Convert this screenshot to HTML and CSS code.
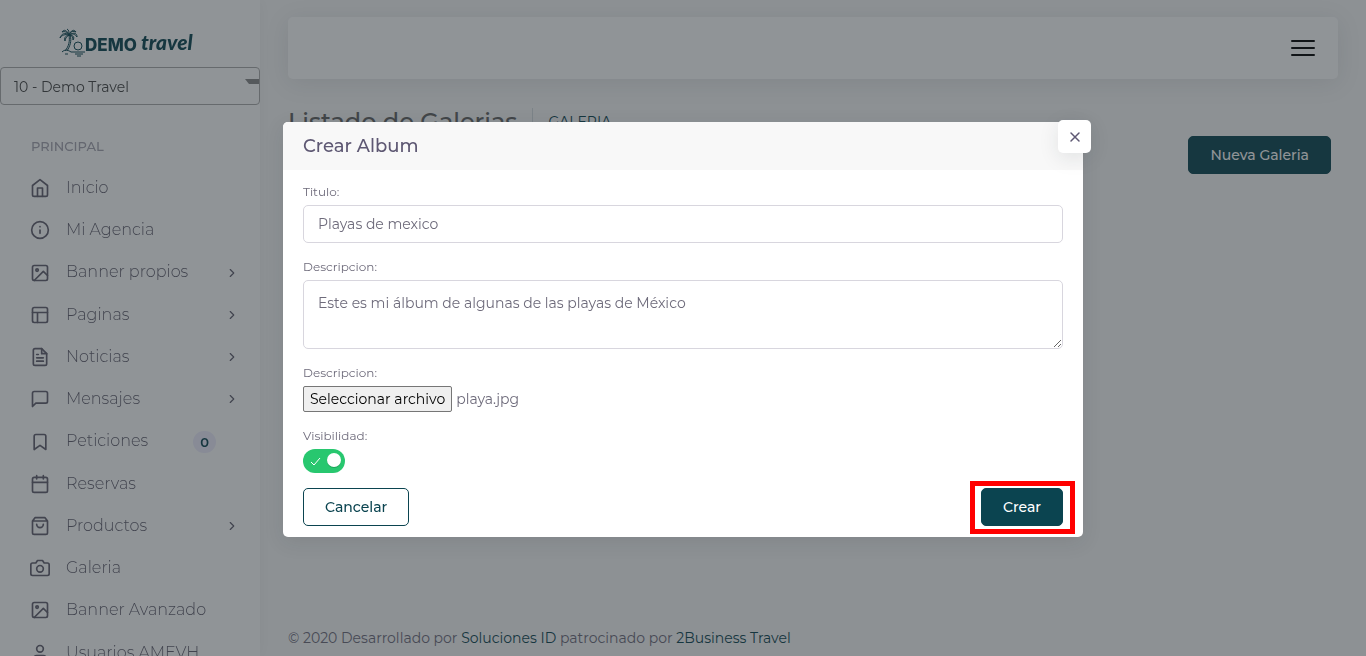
FILE: index.html
```html
<!DOCTYPE html>
<html lang="es">
  <head>
    <meta charset="UTF-8" />
    <meta name="viewport" content="width=device-width, initial-scale=1" />
    <title>Listado de Galerias</title>
    <link rel="stylesheet" href="styles.css">
  </head>
  <body>
    <svg class="sprite" aria-hidden="true">
      <symbol id="i-image" viewBox="0 0 24 24"><rect x="3" y="3" width="18" height="18" rx="2"/><circle cx="8.500" cy="8.500" r="1.500"/><path d="M21 15l-5-5L5 21"/></symbol>
      <symbol id="i-right" viewBox="0 0 24 24"><path d="M9 18l6-6-6-6"/></symbol>
    </svg>

    <aside class="sidebar">
      <a href="#" class="brand" aria-label="Demo Travel">
        <svg class="logo" viewBox="0 0 140 30" width="140" height="30">
          <g class="logo-art">
            <path d="M9 8C7 3 4 2 2 5c3-1 5 0 7 3C5 5 1 7 0 11c2-3 5-4 9-3-4 1-5 3-4 6 0-3 2-4 4-6 3 0 4 2 4 5 2-3 0-5-4-5 3-2 6-1 8 2 0-4-3-5-8-2 2-4 4-4 7-3-2-3-5-2-7 3 0-3 0-5-2-6"/>
            <path d="M9 8c1 6 0 11-4 16M10 8c2 6 0 11-3 16M2 25c3-3 6-2 9 0h14M5 27h3M15 27h8M17 29h4"/>
            <circle cx="18" cy="19" r="4"/>
          </g>
          <text x="25" y="24" class="logo-demo">DEMO</text>
          <text x="81" y="23" class="logo-travel">travel</text>
        </svg>
      </a>
      <select class="agency-select" aria-label="Agencia">
        <option>10 - Demo Travel</option>
      </select>
      <h2 class="menu-title">PRINCIPAL</h2>
      <nav>
        <ul class="menu">
          <li><a href="#"><svg class="icon" viewBox="0 0 24 24"><path d="M3 9l9-7 9 7v11a2 2 0 0 1-2 2H5a2 2 0 0 1-2-2z"/><path d="M9 22V12h6v10"/></svg><span>Inicio</span></a></li>
          <li><a href="#"><svg class="icon" viewBox="0 0 24 24"><circle cx="12" cy="12" r="10"/><path d="M12 16v-4M12 8h.01"/></svg><span>Mi Agencia</span></a></li>
          <li><a href="#"><svg class="icon"><use href="#i-image"/></svg><span>Banner propios</span><svg class="icon arrow"><use href="#i-right"/></svg></a></li>
          <li><a href="#"><svg class="icon" viewBox="0 0 24 24"><rect x="3" y="3" width="18" height="18" rx="2"/><path d="M3 9h18M9 21V9"/></svg><span>Paginas</span><svg class="icon arrow"><use href="#i-right"/></svg></a></li>
          <li><a href="#"><svg class="icon" viewBox="0 0 24 24"><path d="M14 2H6a2 2 0 0 0-2 2v16a2 2 0 0 0 2 2h12a2 2 0 0 0 2-2V8z"/><path d="M14 2v6h6M16 13H8M16 17H8M10 9H8"/></svg><span>Noticias</span><svg class="icon arrow"><use href="#i-right"/></svg></a></li>
          <li><a href="#"><svg class="icon" viewBox="0 0 24 24"><path d="M21 15a2 2 0 0 1-2 2H7l-4 4V5a2 2 0 0 1 2-2h14a2 2 0 0 1 2 2z"/></svg><span>Mensajes</span><svg class="icon arrow"><use href="#i-right"/></svg></a></li>
          <li><a href="#"><svg class="icon" viewBox="0 0 24 24"><path d="M19 21l-7-5-7 5V5a2 2 0 0 1 2-2h10a2 2 0 0 1 2 2z"/></svg><span>Peticiones</span><span class="badge">0</span></a></li>
          <li><a href="#"><svg class="icon" viewBox="0 0 24 24"><rect x="3" y="4" width="18" height="18" rx="2"/><path d="M16 2v4M8 2v4M3 10h18"/></svg><span>Reservas</span></a></li>
          <li><a href="#"><svg class="icon" viewBox="0 0 24 24"><path d="M6 2L3 6v14a2 2 0 0 0 2 2h14a2 2 0 0 0 2-2V6l-3-4zM3 6h18M16 10a4 4 0 0 1-8 0"/></svg><span>Productos</span><svg class="icon arrow"><use href="#i-right"/></svg></a></li>
          <li><a href="#"><svg class="icon" viewBox="0 0 24 24"><path d="M23 19a2 2 0 0 1-2 2H3a2 2 0 0 1-2-2V8a2 2 0 0 1 2-2h4l2-3h6l2 3h4a2 2 0 0 1 2 2z"/><circle cx="12" cy="13" r="4"/></svg><span>Galeria</span></a></li>
          <li><a href="#"><svg class="icon"><use href="#i-image"/></svg><span>Banner Avanzado</span></a></li>
          <li><a href="#"><svg class="icon" viewBox="0 0 24 24"><path d="M20 21v-2a4 4 0 0 0-4-4H8a4 4 0 0 0-4 4v2"/><circle cx="12" cy="7" r="4"/></svg><span>Usuarios AMEVH</span></a></li>
        </ul>
      </nav>
    </aside>

    <div class="page">
      <header class="navbar">
        <button type="button" class="menu-toggle" aria-label="Menu">
          <svg viewBox="0 0 30 24" width="30" height="24"><path d="M4 5h22M4 12h22M4 19h22"/></svg>
        </button>
      </header>
      <main>
        <div class="page-head">
          <h1>Listado de Galerias</h1>
          <a href="#" class="crumb">GALERIA</a>
        </div>
        <div class="page-actions">
          <button type="button" class="btn btn-primary">Nueva Galeria</button>
        </div>
      </main>
      <footer>© 2020 Desarrollado por <a href="#">Soluciones ID</a> patrocinado por <a href="#">2Business Travel</a></footer>
    </div>

    <div class="backdrop">
      <section class="modal" role="dialog" aria-modal="true" aria-labelledby="modal-title">
        <header class="modal-header">
          <h2 id="modal-title">Crear Album</h2>
          <button type="button" class="close" aria-label="Cerrar">
            <svg viewBox="0 0 12 12" width="12" height="12"><path d="M2 2l8 8M10 2l-8 8"/></svg>
          </button>
        </header>
        <form class="modal-body" autocomplete="off">
          <div class="field">
            <label for="titulo">Titulo:</label>
            <input type="text" id="titulo" class="control" value="Playas de mexico" />
          </div>
          <div class="field">
            <label for="descripcion">Descripcion:</label>
            <textarea id="descripcion" class="control">Este es mi álbum de algunas de las playas de México</textarea>
          </div>
          <div class="field">
            <label for="archivo">Descripcion:</label>
            <div class="file-row">
              <input type="file" id="archivo" class="visually-hidden" />
              <label for="archivo" class="file-btn">Seleccionar archivo</label>
              <span>playa.jpg</span>
            </div>
          </div>
          <div class="field">
            <label for="visible">Visibilidad:</label>
            <input type="checkbox" id="visible" class="switch" checked />
          </div>
          <div class="modal-actions">
            <button type="button" class="btn btn-outline">Cancelar</button>
            <span class="highlight"><button type="submit" class="btn btn-primary">Crear</button></span>
          </div>
        </form>
      </section>
    </div>
  </body>
</html>
```
FILE: styles.css
```css
* {
  box-sizing: border-box;
}
body {
  margin: 0;
  background: #f8f8f8;
  color: #6e6b7b;
  font-family: Montserrat, Inter, "Liberation Sans", sans-serif;
  font-size: 14px;
  font-weight: 400;
  line-height: 22px;
}
a {
  color: #0b4450;
  text-decoration: none;
}
h1,
h2 {
  margin: 0;
  font-weight: 500;
}
button,
input,
select,
textarea {
  font: inherit;
}
.sprite {
  display: none;
}

/* sidebar */
.sidebar {
  position: fixed;
  top: 0;
  bottom: 0;
  left: 0;
  width: 260px;
  overflow: hidden;
  background: #fff;
  box-shadow: 0 0 15px rgba(34, 41, 47, 0.05);
}
.brand {
  display: flex;
  justify-content: center;
  padding: 27px 0 10px;
}
.logo {
  overflow: visible;
}
.logo-art {
  fill: none;
  stroke: #0b4450;
  stroke-width: 1;
}
.logo-demo,
.logo-travel {
  fill: #0b4450;
  font-family: Inter, sans-serif;
  font-size: 17px;
  font-weight: 800;
}
.logo-travel {
  font-family: Lato, sans-serif;
  font-size: 21px;
  font-style: italic;
  font-weight: 900;
}
.agency-select {
  display: block;
  width: 100%;
  height: 38px;
  padding: 1px 13px 0;
  border: 1px solid #aaa;
  border-radius: 4px;
  appearance: none;
  color: #444;
  background: #fff url("data:image/svg+xml,%3Csvg xmlns='http://www.w3.org/2000/svg' width='14' height='5'%3E%3Cpath d='M0 0h14v5H4z' fill='%23888'/%3E%3C/svg%3E") no-repeat right 11px;
}
.menu-title {
  padding: 30px 31px 10px;
  color: #a6a4b0;
  font-size: 13px;
  font-weight: 500;
}
.menu {
  margin: 0;
  padding: 0;
  list-style: none;
  font-size: 16px;
  font-weight: 300;
  line-height: 1.39;
}
.menu a {
  display: flex;
  align-items: center;
  padding: 10px 18px 10px 30px;
  color: #625f6e;
}
.icon {
  flex: none;
  width: 20px;
  height: 20px;
  margin-right: 16px;
  fill: none;
  stroke: currentColor;
  stroke-width: 2;
  stroke-linecap: round;
  stroke-linejoin: round;
}
.arrow {
  width: 14px;
  height: 14px;
  margin: 0 3px 0 auto;
}
.badge {
  margin-left: auto;
  margin-right: 26px;
  padding: 0 7px;
  border-radius: 11px;
  background: #eeedfd;
  color: #0b4450;
  font-size: 13px;
  font-weight: 600;
  line-height: 22px;
}

/* page */
.page {
  display: flex;
  flex-direction: column;
  min-height: 100vh;
  margin-left: 260px;
  padding: 17px 28px 7px;
}
.navbar {
  display: flex;
  align-items: center;
  justify-content: flex-end;
  height: 62px;
  padding: 0 20px;
  border-radius: 5px;
  background: #fff;
  box-shadow: 0 4px 24px rgba(34, 41, 47, 0.1);
}
.menu-toggle {
  display: flex;
  padding: 0;
  border: 0;
  background: none;
}
.menu-toggle path {
  stroke: #000;
  stroke-width: 2;
  stroke-linecap: round;
}
.page-head {
  display: flex;
  align-items: center;
  margin-top: 29px;
}
.page-head h1 {
  padding-right: 15px;
  border-right: 1px solid #d6dce1;
  color: #636363;
  font-size: 24px;
  line-height: 28px;
}
.crumb {
  margin-left: 15px;
}
.page-actions {
  display: flex;
  justify-content: flex-end;
  padding-right: 7px;
}
footer {
  margin-top: auto;
}
.btn {
  height: 38px;
  padding: 0 21px;
  border: 1px solid #0b4450;
  border-radius: 5px;
  font-weight: 500;
}
.btn-primary {
  background: #0b4450;
  color: #fff;
}
.btn-outline {
  background: none;
  color: #0b4450;
}

/* modal */
.backdrop {
  position: fixed;
  inset: 0;
  display: flex;
  align-items: center;
  justify-content: center;
  padding-top: 3px;
  background: rgba(34, 41, 47, 0.5);
}
.modal {
  position: relative;
  width: 800px;
  max-width: 100%;
  border-radius: 5px;
  background: #fff;
  box-shadow: 0 5px 20px rgba(34, 41, 47, 0.1);
}
.modal-header {
  padding: 13px 20px;
  border-radius: 5px 5px 0 0;
  background: #f8f8f8;
}
.modal-header h2 {
  color: #5e5873;
  font-size: 18px;
  line-height: 22px;
}
.close {
  position: absolute;
  top: -2px;
  right: -8px;
  display: flex;
  align-items: center;
  justify-content: center;
  width: 33px;
  height: 33px;
  padding: 0;
  border: 0;
  border-radius: 5px;
  background: #fff;
  box-shadow: 0 5px 20px rgba(34, 41, 47, 0.1);
}
.close path {
  stroke: #5e5873;
  stroke-width: 1.5;
  stroke-linecap: round;
}
.modal-body {
  padding: 13px 20px 11px;
}
.field {
  margin-bottom: 15px;
}
.field > label {
  display: block;
  margin-bottom: 4px;
  font-size: 12px;
  line-height: 18px;
}
.control {
  display: block;
  width: 100%;
  height: 38px;
  padding: 6px 14px;
  border: 1px solid #d8d6de;
  border-radius: 5px;
  background: #fff;
  color: #6e6b7b;
}
textarea.control {
  height: 69px;
  padding-top: 11px;
  resize: vertical;
}
.file-row {
  display: flex;
  align-items: center;
  gap: 4px;
}
.file-btn {
  padding: 1px 6px;
  border: 1px solid #767676;
  border-radius: 2px;
  background: #efefef;
  color: #000;
}
.switch {
  display: block;
  width: 42px;
  height: 24px;
  margin: 0;
  appearance: none;
  border-radius: 12px;
  background: #d8d6de;
}
.switch:checked {
  background: #28c76f url("data:image/svg+xml,%3Csvg xmlns='http://www.w3.org/2000/svg' width='42' height='24'%3E%3Cpath d='M8 13l3 3 6-7' fill='none' stroke='%23fff'/%3E%3Ccircle cx='31' cy='12' r='7' fill='%231da65a'/%3E%3Ccircle cx='31' cy='11' r='7' fill='%23fff'/%3E%3C/svg%3E") no-repeat;
}
.modal-actions {
  display: flex;
  justify-content: space-between;
}
.highlight {
  position: relative;
}
.highlight::after {
  content: "";
  position: absolute;
  inset: -7px -12px -8px -11px;
  border: 5px solid #f00;
  pointer-events: none;
}
.visually-hidden {
  position: absolute;
  width: 1px;
  height: 1px;
  margin: -1px;
  overflow: hidden;
  clip: rect(0, 0, 0, 0);
}
```
